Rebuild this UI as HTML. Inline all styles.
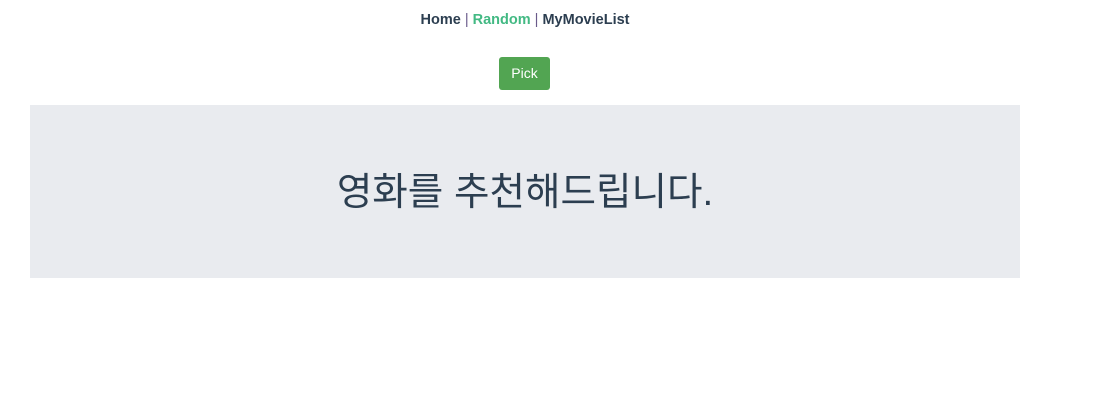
<!DOCTYPE html>
<html><head><meta charset="utf-8"><style>
body{margin:0;width:1114px;height:403px;background:#fff;font-family:"Liberation Sans",sans-serif;position:relative;overflow:hidden}
#nav{position:absolute;top:12px;left:0;width:1050px;text-align:center;font-weight:bold;font-size:14.5px;color:#2c3e50}
#nav .g{color:#42b983}
#nav .p{font-weight:normal;color:#6a5a8a}
#btn{position:absolute;left:499px;top:57px;width:51px;height:33px;background:#52a552;border-radius:3px;color:#fff;font-size:14px;text-align:center;line-height:33px}
#jum{position:absolute;left:30px;top:105px;width:990px;height:173px;background:#e9ebef;text-align:center}
#jum div{font-family:"Liberation Sans","Noto Sans CJK KR",sans-serif;font-size:38.6px;color:#2c3e50;margin-top:65px;line-height:45px}
</style></head><body>
<div id="nav">Home <span class="p">|</span> <span class="g">Random</span> <span class="p">|</span> MyMovieList</div>
<div id="btn">Pick</div>
<div id="jum"><div>영화를 추천해드립니다.</div></div>
</body></html>
